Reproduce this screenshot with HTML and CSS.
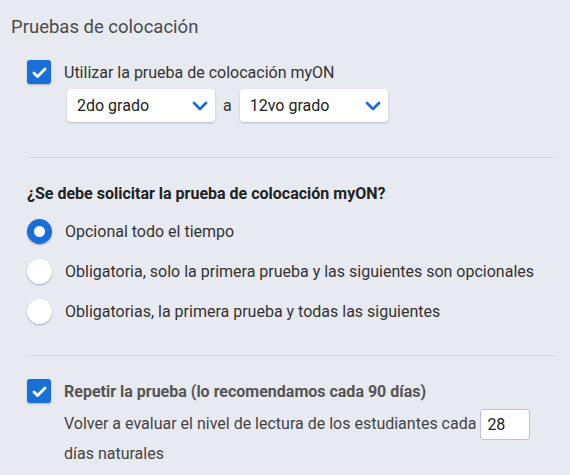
FILE: index.html
```html
<!DOCTYPE html>
<html lang="es">
<head>
  <meta charset="UTF-8">
  <meta name="viewport" content="width=device-width, initial-scale=1.0">
  <title>Pruebas de colocación</title>
  <link rel="stylesheet" href="styles.css">
</head>
<body>
  <div class="panel">
    <h2 class="title">Pruebas de colocación</h2>

    <div class="block first">
      <label class="row">
        <span class="check checked">
          <svg viewBox="0 0 24 24" width="19" height="19"><path d="M5 12.5l4.5 4.5L19 7.5" fill="none" stroke="#fff" stroke-width="3.6" stroke-linecap="round" stroke-linejoin="round"/></svg>
        </span>
        <span class="label">Utilizar la prueba de colocación myON</span>
      </label>
      <div class="range">
        <div class="select">
          <span>2do grado</span>
          <svg viewBox="0 0 16 10" width="16" height="10"><path d="M2 2l6 6 6-6" fill="none" stroke="#1a6ed8" stroke-width="2.8" stroke-linecap="round" stroke-linejoin="round"/></svg>
        </div>
        <span class="sep">a</span>
        <div class="select">
          <span>12vo grado</span>
          <svg viewBox="0 0 16 10" width="16" height="10"><path d="M2 2l6 6 6-6" fill="none" stroke="#1a6ed8" stroke-width="2.8" stroke-linecap="round" stroke-linejoin="round"/></svg>
        </div>
      </div>
    </div>

    <hr class="divider">

    <div class="block">
      <h3 class="question">¿Se debe solicitar la prueba de colocación myON?</h3>
      <label class="row option">
        <span class="radio selected"></span>
        <span class="label">Opcional todo el tiempo</span>
      </label>
      <label class="row option">
        <span class="radio"></span>
        <span class="label">Obligatoria, solo la primera prueba y las siguientes son opcionales</span>
      </label>
      <label class="row option">
        <span class="radio"></span>
        <span class="label">Obligatorias, la primera prueba y todas las siguientes</span>
      </label>
    </div>

    <hr class="divider second">

    <div class="block last">
      <label class="row">
        <span class="check checked">
          <svg viewBox="0 0 24 24" width="19" height="19"><path d="M5 12.5l4.5 4.5L19 7.5" fill="none" stroke="#fff" stroke-width="3.6" stroke-linecap="round" stroke-linejoin="round"/></svg>
        </span>
        <span class="label strong">Repetir la prueba (lo recomendamos cada 90 días)</span>
      </label>
      <p class="retest">Volver a evaluar el nivel de lectura de los estudiantes cada <input class="days" type="text" value="28"> días naturales</p>
    </div>
  </div>
</body>
</html>
```

FILE: styles.css
```css
html,
body {
  margin: 0;
  background: #e8eaf2;
}
body {
  font-family: Roboto, "Noto Sans", Arial, sans-serif;
  color: #333;
}
.panel {
  padding: 14px 15px 0 11px;
  border-left: 2px solid #f1f2f7;
  margin-left: -2px;
}
.title {
  margin: 0;
  font-size: 18.5px;
  font-weight: 400;
  color: #4a4a4a;
  line-height: 26px;
}
.block {
  padding-left: 16px;
}
.block.first {
  padding-top: 20px;
}
.row {
  display: flex;
  align-items: center;
  gap: 13px;
}
.label {
  font-size: 16px;
  color: #333;
}
.label.strong {
  font-weight: 700;
  color: #555;
}
.check {
  width: 24px;
  height: 24px;
  box-sizing: border-box;
  border-radius: 3px;
  background: #1a6ed8;
  display: flex;
  align-items: center;
  justify-content: center;
  box-shadow: 0 1px 2px rgba(0, 0, 0, 0.25);
  flex: none;
}
.range {
  display: flex;
  align-items: center;
  gap: 8px;
  margin: 5px 0 0 40px;
}
.select {
  width: 148px;
  height: 33px;
  box-sizing: border-box;
  background: #fff;
  border-radius: 4px;
  box-shadow: 0 1px 2px rgba(60, 70, 110, 0.3);
  display: flex;
  align-items: center;
  justify-content: space-between;
  padding: 0 7px 0 10px;
  font-size: 16px;
  color: #222;
}
.sep {
  font-size: 16px;
  color: #333;
}
.divider {
  border: 0;
  border-top: 1px solid #d3d7ea;
  margin: 35px 0 0 16px;
}
.divider.second {
  margin-top: 31px;
}
.question {
  margin: 26px 0 0;
  font-size: 16px;
  font-weight: 700;
  color: #222;
}
.option {
  margin-top: 16px;
}
.option + .option {
  margin-top: 15px;
}
.radio {
  width: 25px;
  height: 25px;
  box-sizing: border-box;
  border-radius: 50%;
  background: #fff;
  box-shadow: 0 1px 2px rgba(60, 70, 110, 0.4);
  flex: none;
}
.radio.selected {
  border: 7px solid #1a6ed8;
}
.block.last {
  padding-top: 23px;
}
.retest {
  margin: 6px 0 0 37px;
  font-size: 16px;
  line-height: 30px;
  color: #444;
}
.days {
  width: 50px;
  height: 31px;
  margin: -3px 0;
  box-sizing: border-box;
  border: 1px solid #b9c0da;
  border-radius: 3px;
  padding: 0 6px;
  font-family: inherit;
  font-size: 16px;
  color: #222;
  vertical-align: middle;
}
```
